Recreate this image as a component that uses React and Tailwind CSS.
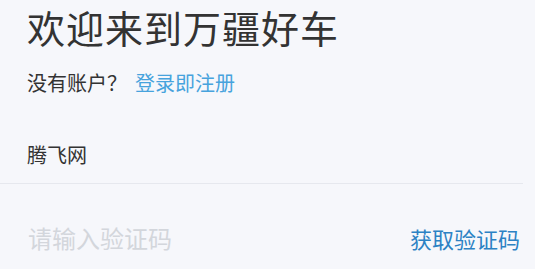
import React from 'react';

export default function App() {
  return (
    <div
      className="min-h-screen bg-[#f6f7fb] pr-[12px] text-[#333]"
      style={{ fontFamily: '"Noto Sans CJK SC", "Noto Sans", sans-serif' }}
    >
      <h1 className="pl-[27px] pt-[4px] text-[38px] leading-[46px] tracking-[1px] font-normal text-[#333]">
        欢迎来到万疆好车
      </h1>
      <p className="pl-[27px] mt-[19px] text-[20px] leading-[28px]">
        没有账户？
        <span className="ml-[8px] text-[#47a3dd]">登录即注册</span>
      </p>
      <div className="mt-[44px] border-b border-[#e6e8ee] pl-[27px] pb-[14px]">
        <input
          defaultValue="腾飞网"
          className="w-full bg-transparent text-[20px] leading-[28px] outline-none text-[#333]"
        />
      </div>
      <div className="flex items-center justify-between pl-[28px] pr-[3px] pt-[38px]">
        <input
          placeholder="请输入验证码"
          className="w-[250px] bg-transparent text-[24px] leading-[32px] outline-none placeholder:text-[#d3d6dc]"
        />
        <button className="text-[22px] leading-[30px] text-[#2c82c4]">获取验证码</button>
      </div>
    </div>
  );
}
